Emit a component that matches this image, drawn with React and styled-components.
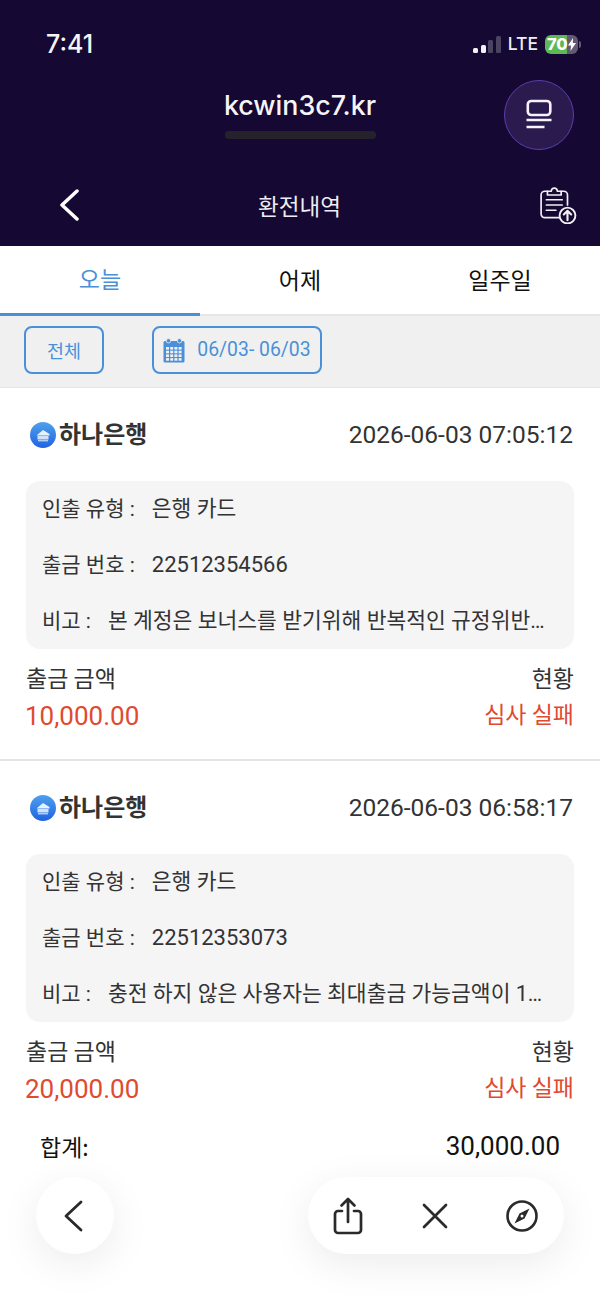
import React from "react";
import styled, { createGlobalStyle } from "styled-components";

const Global = createGlobalStyle`
  html, body { margin: 0; padding: 0; background: #fff; }
  body { font-family: "Liberation Sans", "Noto Sans CJK KR", sans-serif; }
  * { box-sizing: border-box; }
`;

const Page = styled.div`
  position: relative;
  width: 600px;
  height: 1299px;
  overflow: hidden;
  background: #fff;
`;
const Header = styled.header`
  height: 246px;
  background: #150833;
  color: #fff;
  display: flex;
  flex-direction: column;
`;
const StatusBar = styled.div`
  height: 80px;
  padding: 28px 19px 0 46px;
  display: flex;
  justify-content: space-between;
  align-items: flex-start;
`;
const Time = styled.span`
  font: 500 25px/32px Inter, sans-serif;
  color: #f4f4f6;
`;
const StatusRight = styled.div`
  display: flex;
  align-items: center;
  gap: 7px;
  height: 32px;
`;
const Signal = styled.div`
  display: flex;
  align-items: flex-end;
  gap: 2.500px;
  height: 17px;
`;
const SignalBar = styled.i`
  width: 5px;
  height: ${(p) => p.$h}px;
  border-radius: 1.500px;
  background: ${(p) => (p.$on ? "#f2f2f5" : "#4b4460")};
`;
const Lte = styled.span`
  font: 500 17.500px/20px Inter, sans-serif;
  color: #eeeef2;
`;
const Battery = styled.div`
  flex: none;
  width: 33px;
  height: 19px;
  border-radius: 6px;
  display: flex;
  align-items: center;
  padding-left: 2px;
  gap: 1px;
  background: linear-gradient(90deg, #5cb955 0 67%, #625a70 67% 100%);
  font: 800 16.500px/19px Inter, sans-serif;
  color: #fff;
  letter-spacing: -0.3px;
`;
const BatteryNub = styled.i`
  width: 2px;
  height: 7px;
  margin-left: -6px;
  border-radius: 0 2px 2px 0;
  background: #625a70;
`;
const AddressRow = styled.div`
  position: relative;
  height: 84px;
  display: flex;
  flex-direction: column;
  align-items: center;
  padding-top: 8px;
`;
const Domain = styled.div`
  font: 500 26.800px/34px Inter, sans-serif;
  color: #f5f5f8;
`;
const LoadBar = styled.div`
  width: 151px;
  height: 8px;
  margin-top: 9px;
  border-radius: 4px;
  background: #26222c;
`;
const FloatButton = styled.div`
  position: absolute;
  right: 26px;
  top: 0;
  width: 70px;
  height: 70px;
  border-radius: 50%;
  background: #2a1a4d;
  border: 1.500px solid #5a3eb0;
  display: flex;
  align-items: center;
  justify-content: center;
`;
const NavRow = styled.div`
  flex: 1;
  display: grid;
  grid-template-columns: 1fr auto 1fr;
  align-items: center;
  padding: 0 22px 0 59px;
`;
const NavTitle = styled.div`
  font: 400 22.500px/30px "Noto Sans CJK KR", sans-serif;
  color: #eeeef2;
  transform: translateX(-19px);
`;
const NavEnd = styled.div`
  justify-self: end;
  display: flex;
`;
const Tabs = styled.nav`
  height: 70px;
  display: flex;
  border-bottom: 2px solid #e6e6e6;
`;
const Tab = styled.div`
  flex: 1;
  height: 70px;
  display: flex;
  align-items: center;
  justify-content: center;
  padding-bottom: 4px;
  font: 400 23px/30px "Noto Sans CJK KR", sans-serif;
  color: ${(p) => (p.$active ? "#4a90d9" : "#111")};
  border-bottom: ${(p) => (p.$active ? "3px solid #4a90d9" : "0")};
`;
const FilterBar = styled.div`
  height: 72px;
  background: #f0f0f0;
  border-bottom: 1px solid #e4e4e4;
  padding: 10px 24px 0;
  display: flex;
  gap: 48px;
  align-items: flex-start;
`;
const FilterButton = styled.div`
  height: 48px;
  width: ${(p) => p.$w}px;
  border: 2px solid #4a90d9;
  border-radius: 8px;
  color: #4a90d9;
  display: flex;
  align-items: center;
  justify-content: center;
  gap: 12px;
  font: 400 18.500px/24px "Noto Sans CJK KR", sans-serif;
`;
const DateText = styled.span`
  font: 400 19.400px/24px Roboto, sans-serif;
`;
const Card = styled.section`
  height: ${(p) => p.$h}px;
  padding: 0 26px;
  border-bottom: ${(p) => (p.$line ? "2px solid #e4e4e4" : "0")};
`;
const CardHead = styled.div`
  height: 93px;
  display: flex;
  align-items: center;
  justify-content: space-between;
`;
const Bank = styled.div`
  display: flex;
  align-items: center;
  gap: 3px;
  padding-left: 4px;
  padding-bottom: 3px;
  font: 700 24px/32px "Noto Sans CJK KR", sans-serif;
  color: #333;
`;
const BankMark = styled.span`
  display: flex;
  padding-top: 3px;
`;
const Stamp = styled.span`
  font: 400 24.500px/32px Roboto, sans-serif;
  color: #333;
  margin-right: 1px;
`;
const Details = styled.div`
  height: 168px;
  padding: 0 16px;
  border-radius: 14px;
  background: #f5f5f5;
  display: flex;
  flex-direction: column;
  justify-content: space-around;
`;
const DetailRow = styled.div`
  display: flex;
  align-items: center;
  font: 400 21px/28px Roboto, "Noto Sans CJK KR", sans-serif;
  color: #333;
  white-space: nowrap;
`;
const DetailLabel = styled.span`
  flex: none;
  margin-right: 17px;
`;
const DetailValue = styled.span`
  max-width: 443px;
  font-size: ${(p) => (p.$num ? 22 : 21.5)}px;
  overflow: hidden;
  text-overflow: ellipsis;
`;
const Foot = styled.div`
  padding-top: 13px;
  display: grid;
  grid-template-columns: 1fr auto;
  row-gap: 4px;
`;
const FootLabel = styled.span`
  font: 400 23px/30px "Noto Sans CJK KR", sans-serif;
  color: #333;
  text-align: ${(p) => (p.$right ? "right" : "left")};
`;
const Amount = styled.span`
  font: 400 26px/40px Roboto, sans-serif;
  color: #e04a2f;
  margin-left: -1px;
`;
const Status = styled.span`
  font: 400 23px/34px "Noto Sans CJK KR", sans-serif;
  color: #e04a2f;
  text-align: right;
`;
const Total = styled.div`
  display: flex;
  justify-content: space-between;
  align-items: center;
  padding: 0 40px;
  margin-top: -2px;
  height: 36px;
`;
const TotalLabel = styled.span`
  font: 400 23px/30px "Noto Sans CJK KR", sans-serif;
  color: #111;
`;
const TotalValue = styled.span`
  font: 400 26px/30px Roboto, sans-serif;
  color: #111;
`;
const Floating = styled.div`
  position: absolute;
  top: 1177px;
  left: 36px;
  right: 36px;
  display: flex;
  justify-content: space-between;
`;
const Pill = styled.div`
  height: 77px;
  width: ${(p) => p.$w}px;
  border-radius: 39px;
  background: #fff;
  box-shadow: 0 10px 40px rgba(0, 0, 0, 0.08);
  display: flex;
  align-items: center;
  justify-content: ${(p) => (p.$spread ? "space-between" : "center")};
  padding: ${(p) => (p.$spread ? "0 26px 0 25px" : "0 4px 0 0")};
`;

const IconStroke = { fill: "none", stroke: "currentColor", strokeLinecap: "round", strokeLinejoin: "round" };

const ReaderIcon = () => (
  <svg width="26" height="32" viewBox="0 0 26 32" fill="none" stroke="#f4f2fa" strokeWidth="2.600" strokeLinecap="butt">
    <rect x="1.800" y="2" width="22.500" height="14" rx="3.500" />
    <path d="M.5 21h25M.5 28h18" />
  </svg>
);
const ClipUpload = () => (
  <svg width="40" height="38" viewBox="0 0 36 36" fill="none" stroke="#f0eff5" strokeWidth="1.600" strokeLinecap="round" strokeLinejoin="round">
    <path d="M19 30H5.500A3.500 3.500 0 0 1 2 26.500V8.500A3.500 3.500 0 0 1 5.500 5H8M21 5h2.500A3.500 3.500 0 0 1 27 8.500V18" />
    <path d="M8 8.500V5h3.500c.5-4 5.500-4 6 0H21v3.500z" />
    <path d="M7 13h15M7 18h15M7 23h9" />
    <circle cx="27" cy="28" r="7.500" strokeWidth="1.800" />
    <path d="M27 32.500v-9M23.500 27l3.500-3.500 3.500 3.500" strokeWidth="2" />
  </svg>
);
const BankLogo = () => (
  <svg width="26" height="26" viewBox="0 0 26 26">
    <defs>
      <linearGradient id="bankg" x1="0" y1="0" x2="0" y2="1">
        <stop offset="0" stopColor="#4fa0ee" />
        <stop offset="1" stopColor="#1f63e0" />
      </linearGradient>
    </defs>
    <circle cx="13" cy="13" r="13" fill="url(#bankg)" />
    <path d="M6.500 13.500 13 8l6.500 4v1.500z" fill="#e8f2fe" />
    <rect x="7.500" y="14" width="11" height="3.500" fill="#cfe2fb" />
    <rect x="8" y="18.300" width="10" height="1" fill="#e8f2fe" />
  </svg>
);
const CalendarIcon = () => (
  <svg width="22" height="25" viewBox="0 0 22 25">
    <rect x="0.500" y="3" width="21" height="21.500" rx="1.500" fill="#4a90d9" />
    <circle cx="5.500" cy="2.800" r="2.200" fill="#4a90d9" stroke="#f0f0f0" strokeWidth="0.800" />
    <circle cx="16.500" cy="2.800" r="2.200" fill="#4a90d9" stroke="#f0f0f0" strokeWidth="0.800" />
    <g fill="#f0f0f0">
      {[0, 1, 2, 3].map((r) =>
        [0, 1, 2, 3].map((c) => <rect key={`${r}${c}`} x={3 + c * 4.2} y={9 + r * 3.7} width="3" height="2.600" />)
      )}
    </g>
  </svg>
);
const Bolt = () => (
  <svg width="8" height="13" viewBox="0 0 8 13">
    <path d="M5 0 0 7.500h3L2.500 13 8 5H4.800z" fill="#fff" />
  </svg>
);
const Chevron = ({ color, w, h, sw }) => (
  <svg width={w} height={h} viewBox={`0 0 ${w} ${h}`} {...IconStroke} style={{ color }} strokeWidth={sw}>
    <path d={`M${w - 2} 2 L3 ${h / 2} L${w - 2} ${h - 2}`} />
  </svg>
);
const ShareIcon = () => (
  <svg width="30" height="38" viewBox="0 0 30 38" {...IconStroke} style={{ color: "#2a2a2a" }} strokeWidth="2.700">
    <path d="M9 14H5a3 3 0 0 0-3 3v16a3 3 0 0 0 3 3h20a3 3 0 0 0 3-3V17a3 3 0 0 0-3-3h-4" />
    <path d="M15 25V2M8.500 8.500 15 2l6.500 6.500" />
  </svg>
);
const CloseIcon = () => (
  <svg width="26" height="26" viewBox="0 0 26 26" {...IconStroke} style={{ color: "#2a2a2a" }} strokeWidth="2.700">
    <path d="M2 2 24 24M24 2 2 24" />
  </svg>
);
const CompassIcon = () => (
  <svg width="32" height="32" viewBox="0 0 32 32">
    <circle cx="16" cy="16" r="14.500" fill="none" stroke="#2a2a2a" strokeWidth="2.600" />
    <path d="M23.500 8.500 18.500 18.500 8.500 23.500 13.500 13.500z" fill="#2a2a2a" />
    <circle cx="16" cy="16" r="1.500" fill="#fff" />
  </svg>
);

const records = [
  { date: "2026-06-03 07:05:12", no: "22512354566", note: "본 계정은 보너스를 받기위해 반복적인 규정위반행위가 확인되었습니다", amount: "10,000.00", h: 373, line: true },
  { date: "2026-06-03 06:58:17", no: "22512353073", note: "충전 하지 않은 사용자는 최대출금 가능금액이 1만원 입니다 확인바랍니다", amount: "20,000.00", h: 369, line: false },
];

export default function App() {
  return (
    <Page>
      <Global />
      <Header>
        <StatusBar>
          <Time>7:41</Time>
          <StatusRight>
            <Signal>
              <SignalBar $on $h={5} />
              <SignalBar $on $h={8} />
              <SignalBar $h={13} />
              <SignalBar $h={17} />
            </Signal>
            <Lte>LTE</Lte>
            <Battery>
              70
              <Bolt />
            </Battery>
            <BatteryNub />
          </StatusRight>
        </StatusBar>
        <AddressRow>
          <Domain>kcwin3c7.kr</Domain>
          <LoadBar />
          <FloatButton>
            <ReaderIcon />
          </FloatButton>
        </AddressRow>
        <NavRow>
          <Chevron color="#fff" w={20} h={32} sw={3.500} />
          <NavTitle>환전내역</NavTitle>
          <NavEnd>
            <ClipUpload />
          </NavEnd>
        </NavRow>
      </Header>
      <Tabs>
        <Tab $active>오늘</Tab>
        <Tab>어제</Tab>
        <Tab>일주일</Tab>
      </Tabs>
      <FilterBar>
        <FilterButton $w={80}>전체</FilterButton>
        <FilterButton $w={170}>
          <CalendarIcon />
          <DateText>06/03- 06/03</DateText>
        </FilterButton>
      </FilterBar>
      {records.map((r) => (
        <Card key={r.no} $h={r.h} $line={r.line}>
          <CardHead>
            <Bank>
              <BankMark>
                <BankLogo />
              </BankMark>
              하나은행
            </Bank>
            <Stamp>{r.date}</Stamp>
          </CardHead>
          <Details>
            <DetailRow>
              <DetailLabel>인출 유형 :</DetailLabel>
              <DetailValue>은행 카드</DetailValue>
            </DetailRow>
            <DetailRow>
              <DetailLabel>출금 번호 :</DetailLabel>
              <DetailValue $num>{r.no}</DetailValue>
            </DetailRow>
            <DetailRow>
              <DetailLabel>비고 :</DetailLabel>
              <DetailValue>{r.note}</DetailValue>
            </DetailRow>
          </Details>
          <Foot>
            <FootLabel>출금 금액</FootLabel>
            <FootLabel $right>현황</FootLabel>
            <Amount>{r.amount}</Amount>
            <Status>심사 실패</Status>
          </Foot>
        </Card>
      ))}
      <Total>
        <TotalLabel>합계:</TotalLabel>
        <TotalValue>30,000.00</TotalValue>
      </Total>
      <Floating>
        <Pill $w={78}>
          <Chevron color="#2a2a2a" w={20} h={32} sw={2.800} />
        </Pill>
        <Pill $w={256} $spread>
          <ShareIcon />
          <CloseIcon />
          <CompassIcon />
        </Pill>
      </Floating>
    </Page>
  );
}
